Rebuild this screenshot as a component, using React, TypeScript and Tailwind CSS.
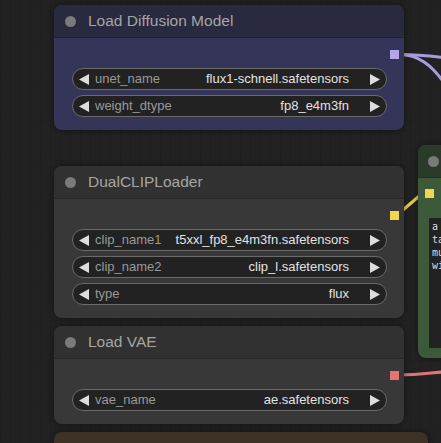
import React from "react";

type Widget = { label: string; value: string };

function ArrowLeft() {
  return (
    <svg width="10" height="11" viewBox="0 0 10 11" className="shrink-0">
      <polygon points="10,0 10,11 0,5.5" fill="#dddddd" />
    </svg>
  );
}

function ArrowRight() {
  return (
    <svg width="10" height="11" viewBox="0 0 10 11" className="shrink-0">
      <polygon points="0,0 0,11 10,5.5" fill="#dddddd" />
    </svg>
  );
}

function ComboWidget({ label, value }: Widget) {
  return (
    <div className="flex h-[22px] items-center rounded-full border border-[#6a6a6a] bg-[#222222] pl-[6px] pr-[6px] text-[13px]">
      <ArrowLeft />
      <span className="ml-[6px] text-[#999999]">{label}</span>
      <span className="flex-1" />
      <span className="mr-[21px] text-[#e2e2e2]">{value}</span>
      <ArrowRight />
    </div>
  );
}

function NodeTitle({ title, bg }: { title: string; bg: string }) {
  return (
    <div className={`flex h-[33px] items-center rounded-t-[8px] border-b border-black/20 ${bg}`}>
      <div className="ml-[11px] h-[11px] w-[11px] rounded-full bg-[#7a7a7a]" />
      <span className="ml-[12px] text-[15.5px] text-[#a5a5a5]">{title}</span>
    </div>
  );
}

function LoaderNode({
  x,
  y,
  title,
  titleBg,
  bodyBg,
  slotBg,
  widgets,
}: {
  x: string;
  y: string;
  title: string;
  titleBg: string;
  bodyBg: string;
  slotBg: string;
  widgets: Widget[];
}) {
  return (
    <div
      className={`absolute ${x} ${y} w-[350px] rounded-[8px] shadow-[0_0_6px_rgba(0,0,0,0.45)] ${bodyBg}`}
    >
      <NodeTitle title={title} bg={titleBg} />
      <div className="px-[17px] pb-[13px] pl-[18px] pt-[5px]">
        <div className="relative h-[22px]">
          <div className={`absolute right-[-12px] top-[7px] h-[9px] w-[9px] ${slotBg}`} />
        </div>
        <div className="mt-[3px] flex flex-col gap-[5px]">
          {widgets.map((w) => (
            <ComboWidget key={w.label} label={w.label} value={w.value} />
          ))}
        </div>
      </div>
    </div>
  );
}

export default function App() {
  return (
    <div className="relative h-[443px] w-[441px] overflow-hidden bg-[#222222] bg-[linear-gradient(to_right,#1f1f1f_1px,transparent_1px),linear-gradient(to_bottom,#202020_1px,transparent_1px)] bg-[size:10px_10px] font-['Liberation_Sans',Arial,sans-serif]">
      {/* links */}
      <svg className="absolute left-0 top-0" width="441" height="443">
        <path d="M399 54.5 C420 54.5 432 56 448 58" stroke="#a99cdc" strokeWidth="3" fill="none" />
        <path d="M399 54.5 C416 54.5 432 62 450 92" stroke="#a99cdc" strokeWidth="3" fill="none" />
        <path d="M396 216 L425 191" stroke="#e3cc4a" strokeWidth="3" fill="none" />
        <path d="M399 375 C415 375 430 373 448 371.5" stroke="#e07474" strokeWidth="3" fill="none" />
      </svg>

      <LoaderNode
        x="left-[54px]"
        y="top-[5px]"
        title="Load Diffusion Model"
        titleBg="bg-[#29293f]"
        bodyBg="bg-[#35355a]"
        slotBg="bg-[#b3a5e6]"
        widgets={[
          { label: "unet_name", value: "flux1-schnell.safetensors" },
          { label: "weight_dtype", value: "fp8_e4m3fn" },
        ]}
      />

      <LoaderNode
        x="left-[54px]"
        y="top-[166px]"
        title="DualCLIPLoader"
        titleBg="bg-[#313131]"
        bodyBg="bg-[#383838]"
        slotBg="bg-[#f1d64f]"
        widgets={[
          { label: "clip_name1", value: "t5xxl_fp8_e4m3fn.safetensors" },
          { label: "clip_name2", value: "clip_l.safetensors" },
          { label: "type", value: "flux" },
        ]}
      />

      <LoaderNode
        x="left-[54px]"
        y="top-[326px]"
        title="Load VAE"
        titleBg="bg-[#313131]"
        bodyBg="bg-[#383838]"
        slotBg="bg-[#e57575]"
        widgets={[{ label: "vae_name", value: "ae.safetensors" }]}
      />

      {/* text encode node, cut off at the right */}
      <div className="absolute left-[418px] top-[145px] w-[80px] rounded-[8px] bg-[#3c5a3a] shadow-[0_0_6px_rgba(0,0,0,0.45)]">
        <div className="flex h-[33px] items-center rounded-t-[8px] border-b border-black/20 bg-[#2b3b2a]">
          <div className="ml-[10px] h-[11px] w-[11px] rounded-full bg-[#7a7a7a]" />
        </div>
        <div className="pb-[10px] pl-[11px] pt-[5px]">
          <div className="relative h-[22px]">
            <div className="absolute left-[-4px] top-[6px] h-[9px] w-[9px] bg-[#f1d64f]" />
          </div>
          <div className="mt-[13px] h-[130px] whitespace-pre bg-[#222222] pl-[3px] pt-[2px] font-['DejaVu_Sans_Mono',monospace] text-[10px] leading-[13px] text-[#dddddd]">
            {"a cute\ntail\nmuch\nwith"}
          </div>
        </div>
      </div>

      {/* next node peeking in at the bottom */}
      <div className="absolute left-[54px] top-[432px] h-[40px] w-[374px] rounded-[8px] bg-[#3d3223] shadow-[0_0_6px_rgba(0,0,0,0.45)]" />
    </div>
  );
}
